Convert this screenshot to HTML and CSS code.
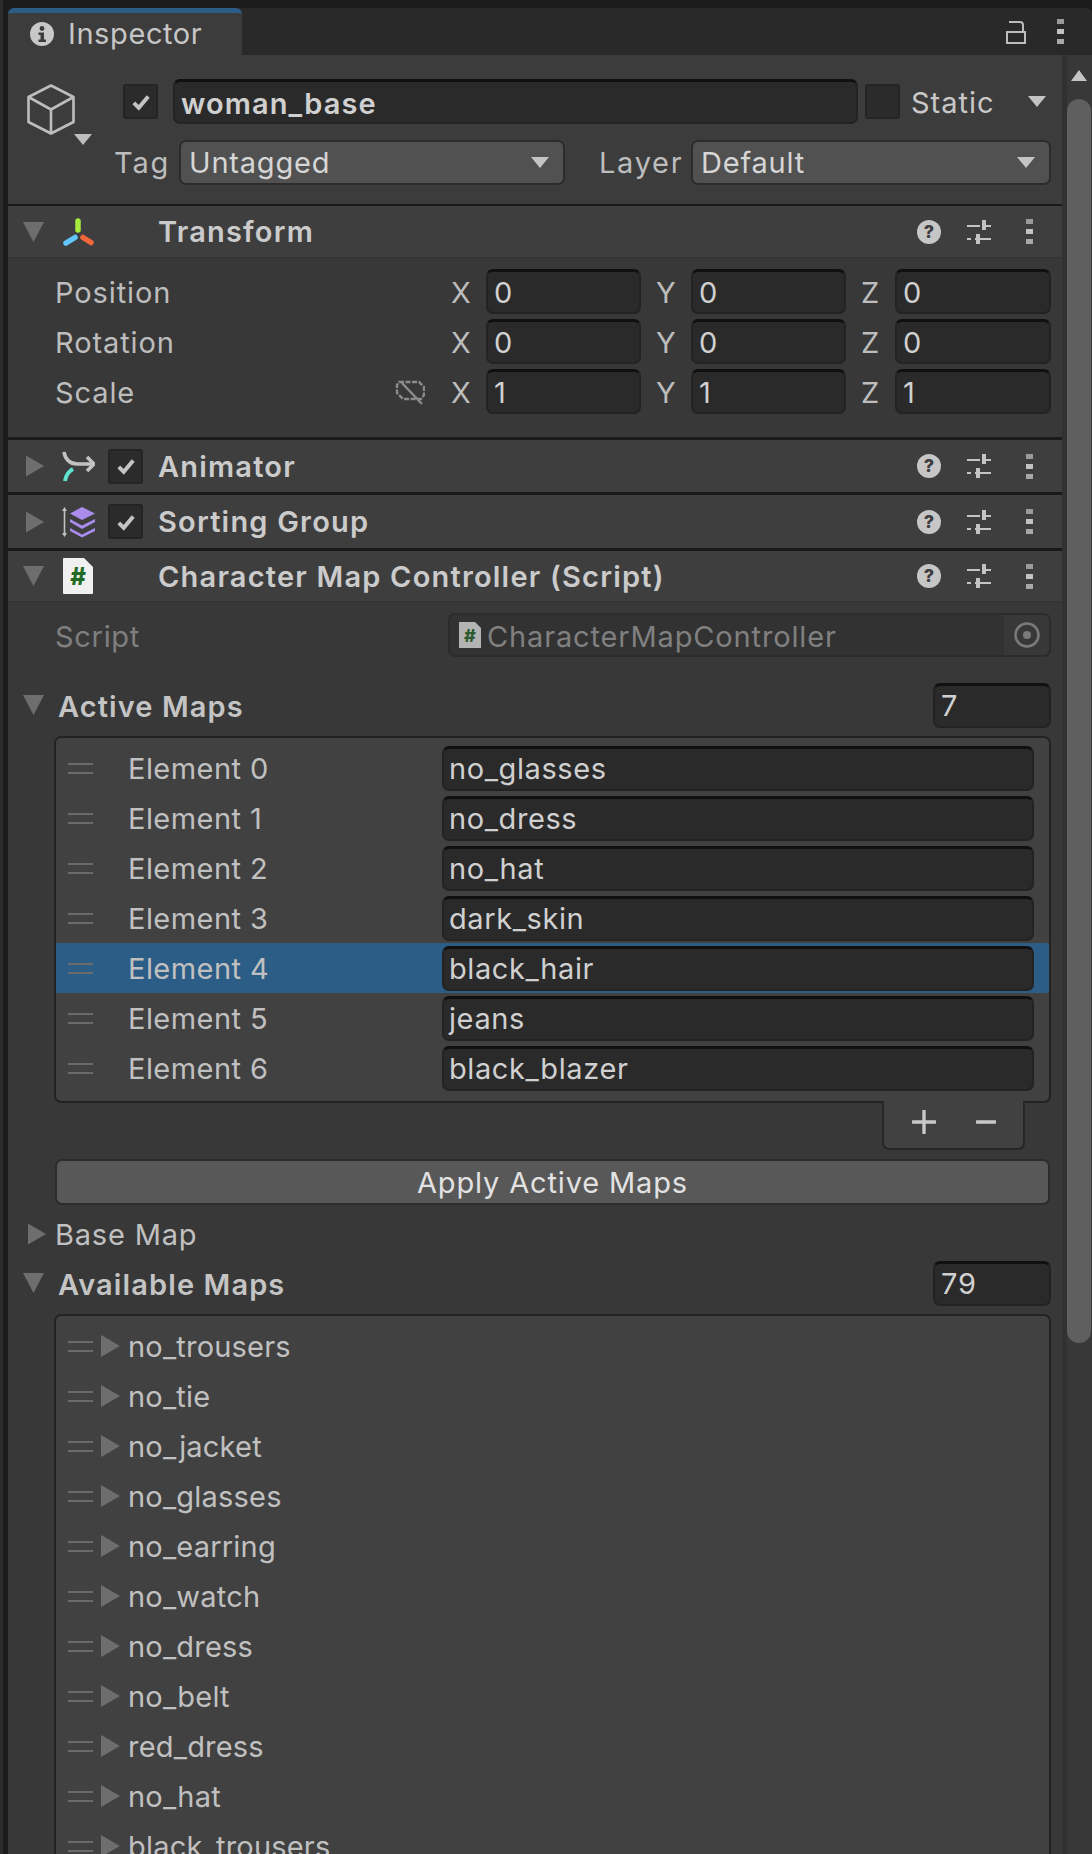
FILE: index.html
```html
<!DOCTYPE html>
<html lang="en">
<head>
    <meta charset="UTF-8">
    <meta name="viewport" content="width=device-width, initial-scale=1.0">
    <title>Inspector</title>
    <link rel="stylesheet" href="styles.css">
</head>
<body>
    <svg class="defs" aria-hidden="true">
        <symbol id="tri-down" viewBox="0 0 21 20"><polygon points="0,0 21,0 10.5,20"/></symbol>
        <symbol id="tri-right" viewBox="0 0 19 22"><polygon points="0,0 19,11 0,22"/></symbol>
        <symbol id="tri-small" viewBox="0 0 18 11"><polygon points="0,0 18,0 9,11"/></symbol>
        <symbol id="check" viewBox="0 0 22 20"><path d="M3 11 L8.5 16.5 L19 4" fill="none" stroke-width="4.4"/></symbol>
        <symbol id="help" viewBox="0 0 24 24">
            <circle cx="12" cy="12" r="12" fill="#c6c6c6"/>
            <text x="12" y="18" text-anchor="middle" class="help-mark">?</text>
        </symbol>
        <symbol id="sliders" viewBox="0 0 24 24">
            <path d="M0 6H13M19 6H24M4 19H0M8 19H24" stroke="#c4c4c4" stroke-width="2" fill="none"/>
            <rect x="15" y="0" width="4" height="10" fill="#c4c4c4"/>
            <rect x="9" y="14" width="4" height="10" fill="#c4c4c4"/>
            <rect x="0" y="18" width="3" height="2" fill="#c4c4c4"/>
        </symbol>
        <symbol id="dots" viewBox="0 0 7 25">
            <rect x="0" y="0" width="7" height="5" fill="#9a9a9a"/>
            <rect x="0" y="10" width="7" height="5" fill="#c2c2c2"/>
            <rect x="0" y="20" width="7" height="5" fill="#a8a8a8"/>
        </symbol>
    </svg>

    <div class="tabbar">
        <div class="tab">
            <svg class="tab-icon" viewBox="0 0 24 24">
                <circle cx="12" cy="12" r="12" fill="#c8c8c8"/>
                <circle cx="12" cy="6.5" r="2.4" fill="#3c3c3c"/>
                <path d="M8.5 10.5H14V17.5H16V20H8.5V17.5H10.5V13H8.5Z" fill="#3c3c3c"/>
            </svg>
            <span class="tab-label">Inspector</span>
        </div>
        <svg class="lock" viewBox="0 0 20 25">
            <path d="M1 13H19V24H1Z" fill="none" stroke="#bcbcbc" stroke-width="2"/>
            <path d="M3 3H14Q17 3 17 6V13" fill="none" stroke="#bcbcbc" stroke-width="2"/>
        </svg>
        <svg class="tab-dots"><use href="#dots"/></svg>
    </div>

    <div class="content">
        <div class="panel">
            <div class="go-header">
                <div class="go-row first">
                    <div class="cube-wrap">
                        <svg class="cube" viewBox="0 0 65 61">
                            <path d="M24 1.5L46.5 13V38L24 49.5L1.5 38V13ZM1.5 13L24 25.5L46.5 13M24 25.5V49.5" fill="none" stroke="#bdbdbd" stroke-width="2.6" stroke-linejoin="round"/>
                            <polygon points="47,50 65,50 56,61" fill="#bdbdbd"/>
                        </svg>
                    </div>
                    <span class="checkbox on"><svg><use href="#check"/></svg></span>
                    <div class="name-field">woman_base</div>
                    <span class="checkbox static-box"></span>
                    <span class="static-label">Static</span>
                    <svg class="arrow static-arrow"><use href="#tri-small"/></svg>
                </div>
                <div class="go-row second">
                    <span class="tag-label">Tag</span>
                    <div class="dropdown tag-drop"><span>Untagged</span><svg class="arrow"><use href="#tri-small"/></svg></div>
                    <span class="layer-label">Layer</span>
                    <div class="dropdown layer-drop"><span>Default</span><svg class="arrow"><use href="#tri-small"/></svg></div>
                </div>
            </div>

            <div class="comp-head open">
                <svg class="tri"><use href="#tri-down"/></svg>
                <svg class="comp-icon" viewBox="0 0 33 28">
                    <path d="M16 3V12" stroke="#a6ea3e" stroke-width="5.5" stroke-linecap="round"/>
                    <path d="M4 25L13 19.5" stroke="#62c6fb" stroke-width="5.5" stroke-linecap="round"/>
                    <path d="M21 19.5L29 24.5" stroke="#f0653a" stroke-width="5.5" stroke-linecap="round"/>
                </svg>
                <span class="no-check"></span>
                <span class="comp-title">Transform</span>
                <svg class="help"><use href="#help"/></svg>
                <svg class="sliders"><use href="#sliders"/></svg>
                <svg class="comp-dots"><use href="#dots"/></svg>
            </div>
            <div class="transform">
                <div class="vec-row">
                    <span class="vec-label">Position</span>
                    <span class="axis">X</span><div class="field vec-a">0</div>
                    <span class="axis">Y</span><div class="field vec-a">0</div>
                    <span class="axis">Z</span><div class="field vec-z">0</div>
                </div>
                <div class="vec-row">
                    <span class="vec-label">Rotation</span>
                    <span class="axis">X</span><div class="field vec-a">0</div>
                    <span class="axis">Y</span><div class="field vec-a">0</div>
                    <span class="axis">Z</span><div class="field vec-z">0</div>
                </div>
                <div class="vec-row">
                    <span class="vec-label">Scale
                        <svg class="unlink" viewBox="0 0 30 25">
                            <path d="M4 2H24L29 7V15L26 19H8L2 13V5Z" fill="none" stroke="#8c8c8c" stroke-width="2.4" stroke-dasharray="5 1.5"/>
                            <path d="M7 3L27 24" stroke="#8c8c8c" stroke-width="2.4"/>
                        </svg>
                    </span>
                    <span class="axis">X</span><div class="field vec-a">1</div>
                    <span class="axis">Y</span><div class="field vec-a">1</div>
                    <span class="axis">Z</span><div class="field vec-z">1</div>
                </div>
            </div>

            <div class="comp-head closed">
                <svg class="tri right"><use href="#tri-right"/></svg>
                <svg class="comp-icon" viewBox="0 0 33 32">
                    <path d="M2 2C3 9 8 14 15 14H31" fill="none" stroke="#c2c2c2" stroke-width="3.6"/>
                    <path d="M25 7L32 14L25 21" fill="none" stroke="#c2c2c2" stroke-width="3.6"/>
                    <path d="M11 19C7 21 4 25 3 31" fill="none" stroke="#5fe3cf" stroke-width="4"/>
                </svg>
                <span class="checkbox on"><svg><use href="#check"/></svg></span>
                <span class="comp-title">Animator</span>
                <svg class="help"><use href="#help"/></svg>
                <svg class="sliders"><use href="#sliders"/></svg>
                <svg class="comp-dots"><use href="#dots"/></svg>
            </div>

            <div class="comp-head closed sorting">
                <svg class="tri right"><use href="#tri-right"/></svg>
                <svg class="comp-icon" viewBox="0 0 33 32">
                    <path d="M2.5 3V29" stroke="#c2c2c2" stroke-width="1.6"/>
                    <path d="M0 5L2.5 1L5 5ZM0 27L2.5 31L5 27Z" fill="#c2c2c2"/>
                    <path d="M20 1L33 7.5L20 14L8 7.5Z" fill="#a98cec"/>
                    <path d="M8 13L20 19.5L33 13V16L20 23L8 16Z" fill="#a98cec"/>
                    <path d="M8 22L20 28.5L33 22V25L20 31.5L8 25Z" fill="#a98cec"/>
                </svg>
                <span class="checkbox on"><svg><use href="#check"/></svg></span>
                <span class="comp-title">Sorting Group</span>
                <svg class="help"><use href="#help"/></svg>
                <svg class="sliders"><use href="#sliders"/></svg>
                <svg class="comp-dots"><use href="#dots"/></svg>
            </div>

            <div class="comp-head open script-head">
                <svg class="tri"><use href="#tri-down"/></svg>
                <svg class="comp-icon doc" viewBox="0 0 30 36">
                    <path d="M1 0H21L30 9V35Q30 36 29 36H1Q0 36 0 35V1Q0 0 1 0Z" fill="#f0f0f0"/>
                    <text x="15" y="27" text-anchor="middle" class="hash">#</text>
                </svg>
                <span class="no-check"></span>
                <span class="comp-title">Character Map Controller (Script)</span>
                <svg class="help"><use href="#help"/></svg>
                <svg class="sliders"><use href="#sliders"/></svg>
                <svg class="comp-dots"><use href="#dots"/></svg>
            </div>

            <div class="script-body">
                <div class="script-row">
                    <span class="script-label">Script</span>
                    <div class="object-field">
                        <svg class="mini-doc" viewBox="0 0 22 26">
                            <path d="M0 0H16L22 6V26H0Z" fill="#b4b4b4"/>
                            <text x="11" y="20" text-anchor="middle" class="hash mini">#</text>
                        </svg>
                        <span class="object-name">CharacterMapController</span>
                        <span class="picker">
                            <svg viewBox="0 0 26 26">
                                <circle cx="13" cy="13" r="11.5" fill="none" stroke="#7a7a7a" stroke-width="2.6"/>
                                <circle cx="13" cy="13" r="4" fill="#7a7a7a"/>
                            </svg>
                        </span>
                    </div>
                </div>

                <div class="array-head active-head">
                    <svg class="tri"><use href="#tri-down"/></svg>
                    <span class="array-title">Active Maps</span>
                    <div class="field size-field">7</div>
                </div>
                <div class="list-box active-list">
                    <div class="el-row"><span class="handle"></span><span class="el-label">Element 0</span><div class="field el-field">no_glasses</div></div>
                    <div class="el-row"><span class="handle"></span><span class="el-label">Element 1</span><div class="field el-field">no_dress</div></div>
                    <div class="el-row"><span class="handle"></span><span class="el-label">Element 2</span><div class="field el-field">no_hat</div></div>
                    <div class="el-row"><span class="handle"></span><span class="el-label">Element 3</span><div class="field el-field">dark_skin</div></div>
                    <div class="el-row selected"><span class="handle"></span><span class="el-label">Element 4</span><div class="field el-field">black_hair</div></div>
                    <div class="el-row"><span class="handle"></span><span class="el-label">Element 5</span><div class="field el-field">jeans</div></div>
                    <div class="el-row"><span class="handle"></span><span class="el-label">Element 6</span><div class="field el-field">black_blazer</div></div>
                </div>
                <div class="list-footer">
                    <svg class="plus" viewBox="0 0 24 24"><path d="M12 1V23M1 12H23" stroke="#c8c8c8" stroke-width="3.4" stroke-linecap="round"/></svg>
                    <svg class="minus" viewBox="0 0 20 4"><path d="M1 2H19" stroke="#c8c8c8" stroke-width="3.4" stroke-linecap="round"/></svg>
                </div>
                <div class="apply-btn">Apply Active Maps</div>
                <div class="base-row">
                    <svg class="tri right"><use href="#tri-right"/></svg>
                    <span class="base-label">Base Map</span>
                </div>
                <div class="array-head">
                    <svg class="tri"><use href="#tri-down"/></svg>
                    <span class="array-title">Available Maps</span>
                    <div class="field size-field">79</div>
                </div>
                <div class="list-box avail-list">
                    <div class="map-row"><span class="handle"></span><svg class="tri map-tri"><use href="#tri-right"/></svg><span class="el-label">no_trousers</span></div>
                    <div class="map-row"><span class="handle"></span><svg class="tri map-tri"><use href="#tri-right"/></svg><span class="el-label">no_tie</span></div>
                    <div class="map-row"><span class="handle"></span><svg class="tri map-tri"><use href="#tri-right"/></svg><span class="el-label">no_jacket</span></div>
                    <div class="map-row"><span class="handle"></span><svg class="tri map-tri"><use href="#tri-right"/></svg><span class="el-label">no_glasses</span></div>
                    <div class="map-row"><span class="handle"></span><svg class="tri map-tri"><use href="#tri-right"/></svg><span class="el-label">no_earring</span></div>
                    <div class="map-row"><span class="handle"></span><svg class="tri map-tri"><use href="#tri-right"/></svg><span class="el-label">no_watch</span></div>
                    <div class="map-row"><span class="handle"></span><svg class="tri map-tri"><use href="#tri-right"/></svg><span class="el-label">no_dress</span></div>
                    <div class="map-row"><span class="handle"></span><svg class="tri map-tri"><use href="#tri-right"/></svg><span class="el-label">no_belt</span></div>
                    <div class="map-row"><span class="handle"></span><svg class="tri map-tri"><use href="#tri-right"/></svg><span class="el-label">red_dress</span></div>
                    <div class="map-row"><span class="handle"></span><svg class="tri map-tri"><use href="#tri-right"/></svg><span class="el-label">no_hat</span></div>
                    <div class="map-row"><span class="handle"></span><svg class="tri map-tri"><use href="#tri-right"/></svg><span class="el-label">black_trousers</span></div>
                </div>
            </div>
        </div>

        <div class="scrollbar">
            <svg class="scroll-up" viewBox="0 0 16 11"><polygon points="8,0 16,11 0,11"/></svg>
            <div class="scroll-thumb"></div>
        </div>
    </div>
</body>
</html>
```

FILE: styles.css
```css
html, body{
    margin: 0;
    height: 1854px;
    overflow: hidden;
}
body{
    background-color: #1c1c1c;
    border-left: 3px solid #2c2c2c;
    box-sizing: border-box;
    padding: 8px 0 0 5px;
    font-family: Inter, "Noto Sans", sans-serif;
    font-size: 29px;
    color: #c8c8c8;
    letter-spacing: 0.8px;
}
.defs{
    display: none;
}

/* tab strip */
.tabbar{
    display: flex;
    align-items: center;
    height: 47px;
    background-color: #292929;
    border-radius: 6px 6px 0 0;
}
.tab{
    display: flex;
    align-items: center;
    box-sizing: border-box;
    width: 234px;
    height: 47px;
    padding-left: 22px;
    background-color: #3c3c3c;
    border-top: 5px solid #2c5d87;
    border-radius: 6px 6px 0 0;
    color: #c6c6c6;
}
.tab-label{
    padding-bottom: 1px;
    letter-spacing: 0.6px;
}
.tab-icon{
    width: 24px;
    height: 24px;
    margin-right: 14px;
}
.lock{
    width: 20px;
    height: 25px;
    margin-left: auto;
}
.tab-dots{
    width: 7px;
    height: 25px;
    margin: 0 28px 0 31px;
}

.content{
    display: flex;
}
.panel{
    width: 1054px;
    flex: none;
    background-color: #383838;
}

/* scrollbar */
.scrollbar{
    flex: 1;
    box-sizing: border-box;
    height: 1800px;
    padding-top: 15px;
    background-color: #383838;
    border-left: 5px solid #313131;
}
.scroll-up{
    display: block;
    width: 16px;
    height: 11px;
    margin-left: 4px;
    fill: #c4c4c4;
}
.scroll-thumb{
    width: 24px;
    height: 1244px;
    margin-top: 18px;
    background-color: #5f5f5f;
    border-radius: 12px;
}

/* game object header */
.go-header{
    box-sizing: border-box;
    height: 151px;
    padding-top: 24px;
    background-color: #3c3c3c;
    border-bottom: 2px solid #1a1a1a;
}
.go-row{
    display: flex;
    align-items: center;
    height: 45px;
}
.go-row.first{
    padding-left: 19px;
}
.go-row.second{
    margin-top: 16px;
    padding-left: 106px;
}
.cube-wrap{
    width: 96px;
    height: 45px;
    flex: none;
}
.cube{
    display: block;
    width: 65px;
    height: 61px;
    margin-top: 5px;
    overflow: visible;
}
.checkbox{
    display: flex;
    align-items: center;
    justify-content: center;
    box-sizing: border-box;
    flex: none;
    width: 35px;
    height: 35px;
    background-color: #2b2b2b;
    border: 2px solid #242424;
    border-radius: 3px;
}
.checkbox svg{
    width: 20px;
    height: 18px;
    stroke: #c4c4c4;
}
.name-field{
    display: flex;
    align-items: center;
    box-sizing: border-box;
    width: 685px;
    height: 45px;
    margin: 0 7px 0 15px;
    padding: 2px 0 0 6px;
    background-color: #2a2a2a;
    border: 2px solid #232323;
    border-top: 3px solid #101010;
    border-radius: 7px;
    font-weight: 600;
    letter-spacing: 1.1px;
    color: #d0d0d0;
}
.static-label{
    margin-left: 11px;
    padding-top: 2px;
    letter-spacing: 1px;
}
.arrow{
    width: 18px;
    height: 11px;
    fill: #c4c4c4;
}
.static-arrow{
    margin-left: 33px;
}
.tag-label{
    width: 65px;
    letter-spacing: 1.8px;
    color: #bdbdbd;
}
.layer-label{
    width: 92px;
    margin-left: 34px;
    letter-spacing: 1.7px;
    color: #bdbdbd;
}
.dropdown{
    display: flex;
    align-items: center;
    justify-content: space-between;
    box-sizing: border-box;
    height: 45px;
    padding: 0 14px 0 8px;
    background-color: #515151;
    border: 2px solid #2c2c2c;
    border-radius: 7px;
    color: #d6d6d6;
}
.tag-drop{
    width: 386px;
}
.layer-drop{
    width: 360px;
}

/* component headers */
.comp-head{
    display: flex;
    align-items: center;
    box-sizing: border-box;
    padding: 0 29px 0 15px;
    background-color: #3e3e3e;
}
.comp-head.open{
    height: 52px;
    border-bottom: 1px solid #343434;
}
.comp-head.closed{
    height: 55px;
    border-bottom: 3px solid #1a1a1a;
}
.comp-head.sorting{
    height: 56px;
}
.script-head{
    height: 52px;
    border-bottom: 2px solid #343434 !important;
}
.tri{
    flex: none;
    width: 21px;
    height: 20px;
    fill: #6e6e6e;
}
.tri.right{
    width: 21px;
    height: 22px;
    padding-left: 3px;
    box-sizing: border-box;
}
.comp-icon{
    flex: none;
    width: 33px;
    height: 32px;
    margin-left: 18px;
}
.comp-icon.doc{
    width: 30px;
    height: 36px;
    margin-left: 19px;
    margin-right: 2px;
}
.no-check{
    flex: none;
    width: 35px;
    margin-left: 13px;
}
.comp-head .checkbox{
    margin-left: 13px;
}
.comp-title{
    margin-left: 15px;
    font-weight: 600;
    letter-spacing: 1.2px;
    color: #cbcbcb;
}
.help{
    width: 24px;
    height: 24px;
    margin-left: auto;
}
.help-mark{
    font-family: Inter, sans-serif;
    font-size: 18px;
    font-weight: 800;
    letter-spacing: 0;
    fill: #3e3e3e;
}
.hash{
    font-family: Inter, sans-serif;
    font-size: 24px;
    font-weight: 800;
    letter-spacing: 0;
    fill: #226b26;
}
.hash.mini{
    font-size: 18px;
    fill: #2d5a2e;
}
.sliders{
    width: 24px;
    height: 24px;
    margin-left: 26px;
}
.comp-dots{
    width: 7px;
    height: 25px;
    margin-left: 35px;
}

/* transform */
.transform{
    box-sizing: border-box;
    height: 182px;
    padding-top: 11px;
    background-color: #383838;
    border-bottom: 3px solid #1a1a1a;
}
.vec-row{
    display: flex;
    align-items: center;
    height: 45px;
    margin-bottom: 5px;
    padding-left: 47px;
}
.vec-label{
    display: flex;
    align-items: center;
    justify-content: space-between;
    box-sizing: border-box;
    width: 381px;
    padding: 2px 11px 0 0;
    letter-spacing: 0.9px;
    color: #bdbdbd;
}
.unlink{
    width: 30px;
    height: 25px;
}
.axis{
    box-sizing: border-box;
    width: 50px;
    padding: 1px 0 0 15px;
    letter-spacing: 0;
    color: #bdbdbd;
}
.field{
    display: flex;
    align-items: center;
    box-sizing: border-box;
    height: 45px;
    padding: 0 0 0 6px;
    background-color: #2a2a2a;
    border: 2px solid #232323;
    border-top: 3px solid #101010;
    border-radius: 7px;
    color: #d0d0d0;
}
.vec-a{
    width: 155px;
}
.vec-z{
    width: 156px;
    margin-left: -1px;
}

/* script component */
.script-body{
    height: 1255px;
    overflow: hidden;
    padding-top: 10px;
}
.script-row{
    display: flex;
    align-items: center;
    padding-left: 47px;
}
.script-label{
    width: 393px;
    padding-top: 2px;
    letter-spacing: 0.7px;
    color: #7f7f7f;
}
.object-field{
    display: flex;
    align-items: center;
    box-sizing: border-box;
    width: 603px;
    height: 44px;
    padding-left: 9px;
    background-color: #323232;
    border: 2px solid #2c2c2c;
    border-radius: 7px;
    color: #808080;
}
.object-name{
    padding-top: 2px;
    letter-spacing: 0.85px;
}
.mini-doc{
    width: 22px;
    height: 26px;
    margin-right: 6px;
}
.picker{
    display: flex;
    align-items: center;
    justify-content: center;
    width: 45px;
    height: 40px;
    margin-left: auto;
    background-color: #383838;
    border-radius: 0 6px 6px 0;
}
.picker svg{
    width: 26px;
    height: 26px;
}
.array-head{
    display: flex;
    align-items: center;
    height: 44px;
    margin-top: 2px;
    padding-left: 15px;
}
.active-head{
    margin-top: 26px;
}
.array-title{
    margin-left: 14px;
    padding-top: 2px;
    font-weight: 600;
    letter-spacing: 1.1px;
    color: #c4c4c4;
}
.size-field{
    width: 118px;
    margin-left: auto;
    margin-right: 11px;
}
.list-box{
    box-sizing: border-box;
    width: 997px;
    margin-left: 46px;
    background-color: #414141;
    border: 2px solid #232323;
    border-radius: 7px;
}
.active-list{
    height: 367px;
    margin-top: 9px;
    padding-top: 5px;
}
.avail-list{
    height: 700px;
    margin-top: 9px;
    padding-top: 5px;
}
.el-row, .map-row{
    display: flex;
    align-items: center;
    box-sizing: border-box;
    height: 50px;
    padding-left: 12px;
}
.el-row{
    padding-right: 15px;
}
.el-row.selected{
    background-color: #2c5d87;
}
.handle{
    flex: none;
    box-sizing: border-box;
    width: 25px;
    height: 11px;
    border-top: 2px solid #6b6b6b;
    border-bottom: 2px solid #6b6b6b;
}
.el-label{
    flex: 1;
    margin-left: 35px;
    padding-top: 1px;
    letter-spacing: 0.45px;
    color: #c0c0c0;
}
.el-field{
    flex: none;
    width: 592px;
    padding-left: 5px;
    letter-spacing: 0.6px;
}
.map-tri{
    width: 19px;
    height: 22px;
    margin-left: 8px;
}
.map-row .el-label{
    margin-left: 8px;
    padding-top: 0;
    letter-spacing: 0.2px;
}

/* list footer */
.list-footer{
    display: flex;
    align-items: center;
    box-sizing: border-box;
    width: 143px;
    height: 49px;
    margin: -2px 0 0 874px;
    padding: 0 0 6px 28px;
    background-color: #414141;
    border: 2px solid #262626;
    border-top: 0;
    border-radius: 0 0 7px 7px;
}
.plus{
    width: 24px;
    height: 24px;
}
.minus{
    width: 20px;
    height: 4px;
    margin-left: 40px;
}
.apply-btn{
    display: flex;
    align-items: center;
    justify-content: center;
    box-sizing: border-box;
    width: 995px;
    height: 46px;
    margin: 9px 0 0 47px;
    background-color: #585858;
    border: 2px solid #2c2c2c;
    border-radius: 7px;
    letter-spacing: 0.85px;
    color: #e2e2e2;
}
.base-row{
    display: flex;
    align-items: center;
    height: 50px;
    margin-top: 4px;
    padding-left: 17px;
}
.base-label{
    margin-left: 9px;
    color: #c0c0c0;
}
```
